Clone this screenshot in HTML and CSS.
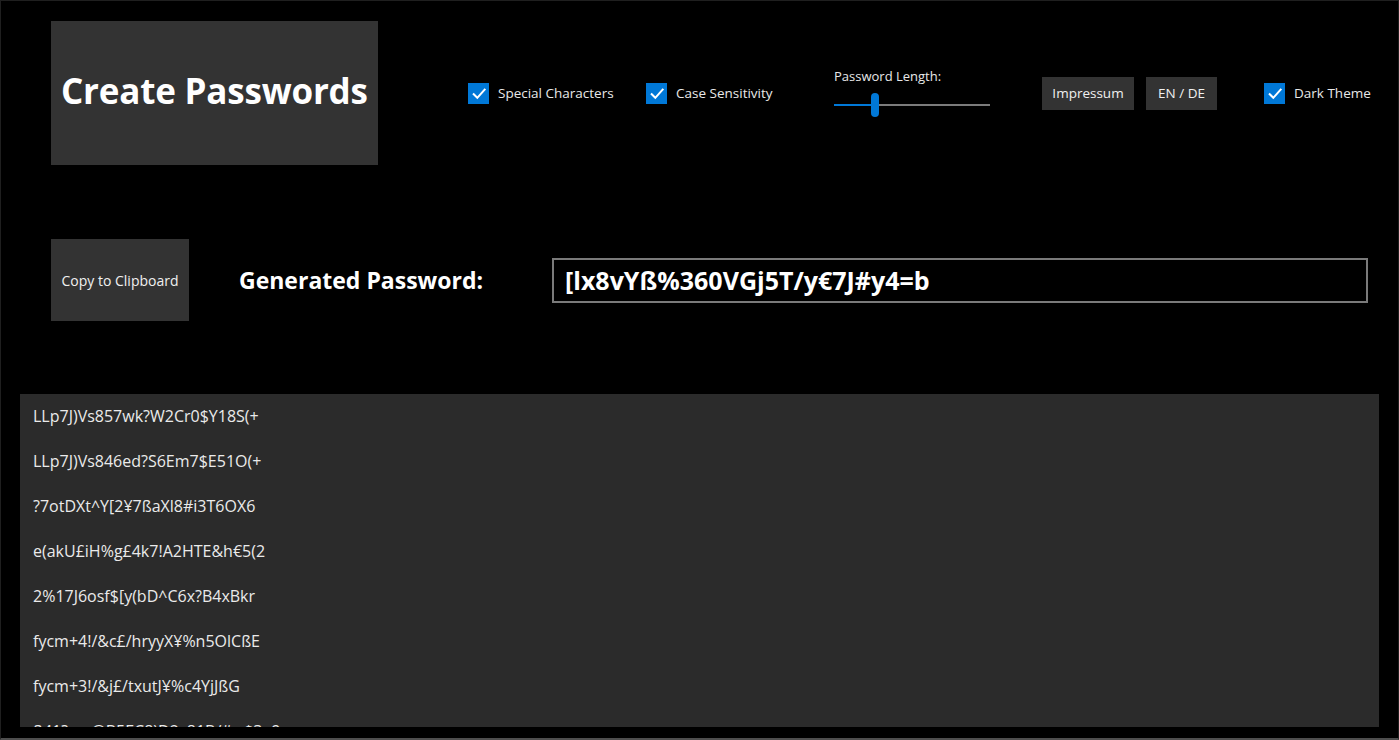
FILE: index.html
```html
<!DOCTYPE html>
<html lang="en">
<head>
<meta charset="utf-8">
<title>Create Passwords</title>
<link rel="stylesheet" href="styles.css">
</head>
<body>
<div class="window">
  <div class="top-row">
    <div class="title-box"><h1 class="title">Create Passwords</h1></div>
    <label class="check check-special">
      <span class="box"><svg viewBox="0 0 20 20" width="20" height="20"><path d="M4 10.5 L8.3 14.8 L16.3 5.8" fill="none" stroke="#fff" stroke-width="2"/></svg></span>
      <span class="check-label">Special Characters</span>
    </label>
    <label class="check check-case">
      <span class="box"><svg viewBox="0 0 20 20" width="20" height="20"><path d="M4 10.5 L8.3 14.8 L16.3 5.8" fill="none" stroke="#fff" stroke-width="2"/></svg></span>
      <span class="check-label">Case Sensitivity</span>
    </label>
    <div class="length-group">
      <div class="length-label">Password Length:</div>
      <div class="slider">
        <div class="track"></div>
        <div class="track-fill"></div>
        <div class="thumb"></div>
      </div>
    </div>
    <button class="btn btn-impressum">Impressum</button>
    <button class="btn btn-lang">EN / DE</button>
    <label class="check check-theme">
      <span class="box"><svg viewBox="0 0 20 20" width="20" height="20"><path d="M4 10.5 L8.3 14.8 L16.3 5.8" fill="none" stroke="#fff" stroke-width="2"/></svg></span>
      <span class="check-label">Dark Theme</span>
    </label>
  </div>

  <div class="gen-row">
    <button class="btn btn-copy">Copy to Clipboard</button>
    <div class="gen-label">Generated Password:</div>
    <div class="gen-field">[lx8vYß%360VGj5T/y€7J#y4=b</div>
  </div>

  <div class="history">
    <div class="item">LLp7J)Vs857wk?W2Cr0$Y18S(+</div>
    <div class="item">LLp7J)Vs846ed?S6Em7$E51O(+</div>
    <div class="item">?7otDXt^Y[2¥7ßaXl8#i3T6OX6</div>
    <div class="item">e(akU£iH%g£4k7!A2HTE&amp;h€5(2</div>
    <div class="item">2%17J6osf$[y(bD^C6x?B4xBkr</div>
    <div class="item">fycm+4!/&amp;c£/hryyX¥%n5OlCßE</div>
    <div class="item">fycm+3!/&amp;j£/txutJ¥%c4YjJßG</div>
    <div class="item">ß41?mx@B5EC8)D2v81B/#w$3e9</div>
  </div>
</div>
</body>
</html>
```

FILE: styles.css
```css
* { box-sizing: border-box; }

html, body {
  margin: 0;
  padding: 0;
  background: #000;
}

body {
  font-family: "Open Sans", "Noto Sans", sans-serif;
  color: #fff;
}

.window {
  width: 1399px;
  height: 740px;
  border: 1px solid #1f1f1f;
  border-bottom: 2px solid #4e4e4e;
  display: flex;
  flex-direction: column;
  overflow: hidden;
}

/* ---------- top row ---------- */
.top-row {
  display: flex;
  align-items: center;
  padding: 20px 0 0 50px;
}

.title-box {
  width: 327px;
  height: 144px;
  background: #333333;
  display: flex;
  align-items: center;
  padding: 0 0 5px 10px;
  margin-right: 90px;
}

.title {
  margin: 0;
  font-size: 35px;
  font-weight: 700;
  letter-spacing: -0.2px;
  color: #fff;
  white-space: nowrap;
}

.check {
  display: flex;
  align-items: center;
  gap: 9px;
  font-size: 13.5px;
  color: #e8e8e8;
}

.check-special { width: 178px; }
.check-case { width: 188px; }
.check-theme { margin-left: 47px; }

.box {
  width: 21px;
  height: 21px;
  background: #0078d7;
  display: flex;
  align-items: center;
  justify-content: center;
}

.box svg { display: block; }

.length-group {
  width: 208px;
  display: flex;
  flex-direction: column;
  gap: 8px;
  padding-bottom: 2px;
}

.length-label {
  font-size: 13px;
  line-height: 18px;
  color: #e8e8e8;
}

.slider {
  position: relative;
  width: 156px;
  height: 24px;
}

.track {
  position: absolute;
  left: 0;
  right: 0;
  top: 11px;
  height: 2px;
  background: #7b7b7b;
}

.track-fill {
  position: absolute;
  left: 0;
  width: 40px;
  top: 11px;
  height: 2px;
  background: #0078d7;
}

.thumb {
  position: absolute;
  left: 37px;
  top: 0;
  width: 8px;
  height: 24px;
  border-radius: 4px;
  background: #0078d7;
}

.btn {
  font-family: "Open Sans", "Noto Sans", sans-serif;
  border: none;
  background: #333333;
  color: #f0f0f0;
  font-size: 13.5px;
  padding: 0;
  margin: 0;
}

.btn-impressum {
  width: 92px;
  height: 33px;
  margin-right: 12px;
}

.btn-lang {
  width: 71px;
  height: 33px;
}

/* ---------- generated row ---------- */
.gen-row {
  display: flex;
  align-items: center;
  padding: 74px 0 0 50px;
}

.btn-copy {
  width: 138px;
  height: 82px;
  font-size: 14px;
  margin-right: 50px;
}

.gen-label {
  width: 313px;
  font-size: 23px;
  font-weight: 700;
  color: #fff;
  white-space: nowrap;
}

.gen-field {
  width: 816px;
  height: 45px;
  border: 2px solid #7a7a7a;
  background: #000;
  display: flex;
  align-items: center;
  padding-left: 11px;
  font-size: 25px;
  font-weight: 700;
  color: #fff;
}

/* ---------- history list ---------- */
.history {
  flex: 1;
  margin: 73px 19px 11px 19px;
  background: #2b2b2b;
  padding-left: 13px;
  overflow: hidden;
}

.item {
  font-size: 16px;
  line-height: 45px;
  height: 45px;
  color: #eaeaea;
  white-space: nowrap;
}
```
